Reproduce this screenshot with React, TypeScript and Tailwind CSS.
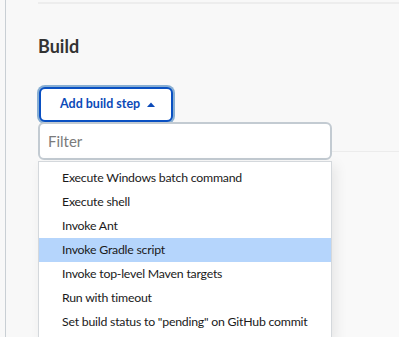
import { useState } from "react";

const STEPS = [
  "Execute Windows batch command",
  "Execute shell",
  "Invoke Ant",
  "Invoke Gradle script",
  "Invoke top-level Maven targets",
  "Run with timeout",
  'Set build status to "pending" on GitHub commit',
];

export default function App() {
  const [active, setActive] = useState(3);

  return (
    <div
      className="flex h-[337px] w-[399px] overflow-hidden bg-[#f8f8f8] text-[#333]"
      style={{ fontFamily: 'Lato, "Liberation Sans", sans-serif' }}
    >
      {/* page edge */}
      <div className="ml-[5px] w-px shrink-0 bg-[#c9cfd4]" />

      <div className="flex flex-1 flex-col pl-[32px]">
        <div className="mt-[2px] h-[2px] bg-[#ededed]" />

        <h2 className="mt-[31px] text-[18px] font-bold leading-[22px] text-[#333]">
          Build
        </h2>

        <div className="relative mt-[30px] flex">
          <button
            type="button"
            className="ml-px flex h-[35px] w-[134px] items-center gap-[7px] whitespace-nowrap rounded-[6px] border-2 border-[#0a50c2] bg-white pl-[19px] text-[12.5px] font-bold text-[#0b4ab8] shadow-[0_0_0_2px_#87aed3]"
          >
            Add build step
            <svg width="8" height="5" viewBox="0 0 8 5" className="mt-[-1px]">
              <path d="M0 5 L4 0.5 L8 5 Z" fill="currentColor" />
            </svg>
          </button>

          {/* dropdown menu */}
          <div className="absolute left-0 top-[35px] z-10 w-[294px]">
            <div className="flex h-[38px] items-center rounded-[6px] border-2 border-[#c3cbd2] bg-white px-[8px] text-[15px] text-[#7b7b7b]">
              Filter
            </div>
            <ul className="mt-px border border-[#d4d8dc] bg-white py-[4px] shadow-[4px_4px_12px_rgba(0,0,0,0.08)]">
              {STEPS.map((s, i) => (
                <li
                  key={s}
                  onMouseEnter={() => setActive(i)}
                  className={
                    "flex h-[24px] items-center whitespace-nowrap pl-[23px] text-[12.3px] tracking-[-0.22px] text-[#1a1a1a] " +
                    (i === active ? "bg-[#b5d5fc]" : "")
                  }
                >
                  {s}
                </li>
              ))}
            </ul>
          </div>
        </div>

        {/* section below, mostly hidden by the menu */}
        <div className="mt-[29px] flex-1 border-t border-[#ececec] bg-[#f9f9f9]" />
      </div>
    </div>
  );
}
